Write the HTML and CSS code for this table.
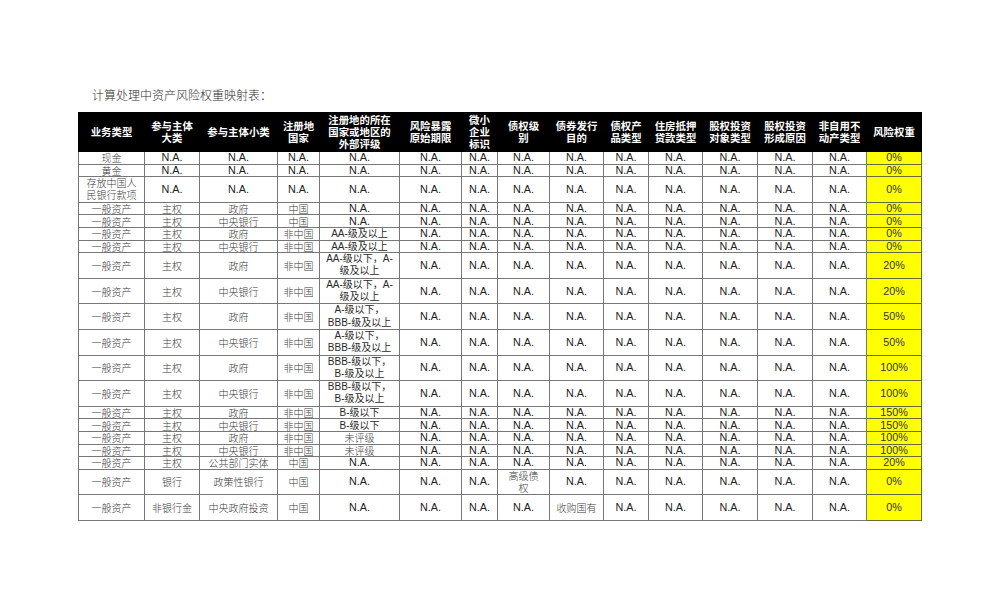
FILE: index.html
```html
<!DOCTYPE html>
<html lang="zh">
<head>
<meta charset="utf-8">
<title>计算处理中资产风险权重映射表</title>
<link rel="stylesheet" href="styles.css">
</head>
<body>
<main class="page">
  <p class="title">计算处理中资产风险权重映射表：</p>
  <table class="risk">
    <colgroup>
      <col class="c66"><col class="c55"><col class="c78"><col class="c42"><col class="c80">
      <col class="c62"><col class="c36"><col class="c52"><col class="c54"><col class="c45">
      <col class="c54"><col class="c55"><col class="c55"><col class="c54"><col class="c55">
    </colgroup>
    <thead>
      <tr class="h">
        <th>业务类型</th>
        <th>参与主体<br>大类</th>
        <th>参与主体小类</th>
        <th>注册地<br>国家</th>
        <th>注册地的所在<br>国家或地区的<br>外部评级</th>
        <th>风险暴露<br>原始期限</th>
        <th>微小<br>企业<br>标识</th>
        <th>债权级<br>别</th>
        <th>债券发行<br>目的</th>
        <th>债权产<br>品类型</th>
        <th>住房抵押<br>贷款类型</th>
        <th>股权投资<br>对象类型</th>
        <th>股权投资<br>形成原因</th>
        <th>非自用不<br>动产类型</th>
        <th>风险权重</th>
      </tr>
    </thead>
    <tbody>
      <tr class="s"><td class="zh">现金</td><td>N.A.</td><td>N.A.</td><td>N.A.</td><td>N.A.</td><td>N.A.</td><td>N.A.</td><td>N.A.</td><td>N.A.</td><td>N.A.</td><td>N.A.</td><td>N.A.</td><td>N.A.</td><td>N.A.</td><td class="w">0%</td></tr>
      <tr class="s"><td class="zh">黄金</td><td>N.A.</td><td>N.A.</td><td>N.A.</td><td>N.A.</td><td>N.A.</td><td>N.A.</td><td>N.A.</td><td>N.A.</td><td>N.A.</td><td>N.A.</td><td>N.A.</td><td>N.A.</td><td>N.A.</td><td class="w">0%</td></tr>
      <tr class="t"><td class="zh two">存放中国人<br>民银行款项</td><td>N.A.</td><td>N.A.</td><td>N.A.</td><td>N.A.</td><td>N.A.</td><td>N.A.</td><td>N.A.</td><td>N.A.</td><td>N.A.</td><td>N.A.</td><td>N.A.</td><td>N.A.</td><td>N.A.</td><td class="w">0%</td></tr>
      <tr class="s"><td class="zh">一般资产</td><td class="zh">主权</td><td class="zh">政府</td><td class="zh">中国</td><td>N.A.</td><td>N.A.</td><td>N.A.</td><td>N.A.</td><td>N.A.</td><td>N.A.</td><td>N.A.</td><td>N.A.</td><td>N.A.</td><td>N.A.</td><td class="w">0%</td></tr>
      <tr class="s"><td class="zh">一般资产</td><td class="zh">主权</td><td class="zh">中央银行</td><td class="zh">中国</td><td>N.A.</td><td>N.A.</td><td>N.A.</td><td>N.A.</td><td>N.A.</td><td>N.A.</td><td>N.A.</td><td>N.A.</td><td>N.A.</td><td>N.A.</td><td class="w">0%</td></tr>
      <tr class="s"><td class="zh">一般资产</td><td class="zh">主权</td><td class="zh">政府</td><td class="zh">非中国</td><td class="mix">AA-级及以上</td><td>N.A.</td><td>N.A.</td><td>N.A.</td><td>N.A.</td><td>N.A.</td><td>N.A.</td><td>N.A.</td><td>N.A.</td><td>N.A.</td><td class="w">0%</td></tr>
      <tr class="s"><td class="zh">一般资产</td><td class="zh">主权</td><td class="zh">中央银行</td><td class="zh">非中国</td><td class="mix">AA-级及以上</td><td>N.A.</td><td>N.A.</td><td>N.A.</td><td>N.A.</td><td>N.A.</td><td>N.A.</td><td>N.A.</td><td>N.A.</td><td>N.A.</td><td class="w">0%</td></tr>
      <tr class="t"><td class="zh">一般资产</td><td class="zh">主权</td><td class="zh">政府</td><td class="zh">非中国</td><td class="mix two">AA-级以下，A-<br>级及以上</td><td>N.A.</td><td>N.A.</td><td>N.A.</td><td>N.A.</td><td>N.A.</td><td>N.A.</td><td>N.A.</td><td>N.A.</td><td>N.A.</td><td class="w">20%</td></tr>
      <tr class="t"><td class="zh">一般资产</td><td class="zh">主权</td><td class="zh">中央银行</td><td class="zh">非中国</td><td class="mix two">AA-级以下，A-<br>级及以上</td><td>N.A.</td><td>N.A.</td><td>N.A.</td><td>N.A.</td><td>N.A.</td><td>N.A.</td><td>N.A.</td><td>N.A.</td><td>N.A.</td><td class="w">20%</td></tr>
      <tr class="t"><td class="zh">一般资产</td><td class="zh">主权</td><td class="zh">政府</td><td class="zh">非中国</td><td class="mix two">A-级以下，<br>BBB-级及以上</td><td>N.A.</td><td>N.A.</td><td>N.A.</td><td>N.A.</td><td>N.A.</td><td>N.A.</td><td>N.A.</td><td>N.A.</td><td>N.A.</td><td class="w">50%</td></tr>
      <tr class="t"><td class="zh">一般资产</td><td class="zh">主权</td><td class="zh">中央银行</td><td class="zh">非中国</td><td class="mix two">A-级以下，<br>BBB-级及以上</td><td>N.A.</td><td>N.A.</td><td>N.A.</td><td>N.A.</td><td>N.A.</td><td>N.A.</td><td>N.A.</td><td>N.A.</td><td>N.A.</td><td class="w">50%</td></tr>
      <tr class="t"><td class="zh">一般资产</td><td class="zh">主权</td><td class="zh">政府</td><td class="zh">非中国</td><td class="mix two">BBB-级以下，<br>B-级及以上</td><td>N.A.</td><td>N.A.</td><td>N.A.</td><td>N.A.</td><td>N.A.</td><td>N.A.</td><td>N.A.</td><td>N.A.</td><td>N.A.</td><td class="w">100%</td></tr>
      <tr class="t"><td class="zh">一般资产</td><td class="zh">主权</td><td class="zh">中央银行</td><td class="zh">非中国</td><td class="mix two">BBB-级以下，<br>B-级及以上</td><td>N.A.</td><td>N.A.</td><td>N.A.</td><td>N.A.</td><td>N.A.</td><td>N.A.</td><td>N.A.</td><td>N.A.</td><td>N.A.</td><td class="w">100%</td></tr>
      <tr class="s"><td class="zh">一般资产</td><td class="zh">主权</td><td class="zh">政府</td><td class="zh">非中国</td><td class="mix">B-级以下</td><td>N.A.</td><td>N.A.</td><td>N.A.</td><td>N.A.</td><td>N.A.</td><td>N.A.</td><td>N.A.</td><td>N.A.</td><td>N.A.</td><td class="w">150%</td></tr>
      <tr class="s"><td class="zh">一般资产</td><td class="zh">主权</td><td class="zh">中央银行</td><td class="zh">非中国</td><td class="mix">B-级以下</td><td>N.A.</td><td>N.A.</td><td>N.A.</td><td>N.A.</td><td>N.A.</td><td>N.A.</td><td>N.A.</td><td>N.A.</td><td>N.A.</td><td class="w">150%</td></tr>
      <tr class="s"><td class="zh">一般资产</td><td class="zh">主权</td><td class="zh">政府</td><td class="zh">非中国</td><td class="zh">未评级</td><td>N.A.</td><td>N.A.</td><td>N.A.</td><td>N.A.</td><td>N.A.</td><td>N.A.</td><td>N.A.</td><td>N.A.</td><td>N.A.</td><td class="w">100%</td></tr>
      <tr class="s"><td class="zh">一般资产</td><td class="zh">主权</td><td class="zh">中央银行</td><td class="zh">非中国</td><td class="zh">未评级</td><td>N.A.</td><td>N.A.</td><td>N.A.</td><td>N.A.</td><td>N.A.</td><td>N.A.</td><td>N.A.</td><td>N.A.</td><td>N.A.</td><td class="w">100%</td></tr>
      <tr class="s"><td class="zh">一般资产</td><td class="zh">主权</td><td class="zh">公共部门实体</td><td class="zh">中国</td><td>N.A.</td><td>N.A.</td><td>N.A.</td><td>N.A.</td><td>N.A.</td><td>N.A.</td><td>N.A.</td><td>N.A.</td><td>N.A.</td><td>N.A.</td><td class="w">20%</td></tr>
      <tr class="t"><td class="zh">一般资产</td><td class="zh">银行</td><td class="zh">政策性银行</td><td class="zh">中国</td><td>N.A.</td><td>N.A.</td><td>N.A.</td><td class="zh two">高级债<br>权</td><td>N.A.</td><td>N.A.</td><td>N.A.</td><td>N.A.</td><td>N.A.</td><td>N.A.</td><td class="w">0%</td></tr>
      <tr class="t"><td class="zh">一般资产</td><td class="zh">非银行金</td><td class="zh">中央政府投资</td><td class="zh">中国</td><td>N.A.</td><td>N.A.</td><td>N.A.</td><td>N.A.</td><td class="zh">收购国有</td><td>N.A.</td><td>N.A.</td><td>N.A.</td><td>N.A.</td><td>N.A.</td><td class="w">0%</td></tr>
    </tbody>
  </table>
</main>
</body>
</html>
```
FILE: styles.css
```css
html, body {
  margin: 0;
  padding: 0;
  background: #ffffff;
}

.page {
  padding: 87px 0 0 78px;
  font-family: "Liberation Sans", "Noto Sans CJK SC", sans-serif;
  color: #222;
}

.title {
  margin: 0 0 7px 14px;
  font-family: "Liberation Serif", "Noto Sans CJK SC", serif;
  font-size: 12px;
  line-height: 18px;
  color: #2e2e2e;
  font-weight: 300;
}

.risk {
  border-collapse: collapse;
  table-layout: fixed;
  width: 843px;
}

.c36 { width: 36px; }
.c42 { width: 42px; }
.c45 { width: 45px; }
.c52 { width: 52px; }
.c54 { width: 54px; }
.c55 { width: 55px; }
.c62 { width: 62px; }
.c66 { width: 66px; }
.c78 { width: 78px; }
.c80 { width: 80px; }

.risk th {
  background: #000;
  color: #fff;
  font-family: "Noto Sans CJK SC", sans-serif;
  font-weight: 700;
  font-size: 10.4px;
  line-height: 12.3px;
  padding: 0;
  border: 1px solid #000;
  text-align: center;
  vertical-align: middle;
}

.risk tr.h { height: 39px; }
.risk tr.s { height: 12.6px; }
.risk tr.t { height: 25.3px; }

.risk td {
  border: 1px solid #777;
  padding: 0;
  text-align: center;
  vertical-align: middle;
  font-size: 10.8px;
  line-height: 11px;
  color: #222;
  white-space: nowrap;
  overflow: hidden;
}

.risk td.zh {
  font-family: "Noto Sans CJK SC", sans-serif;
  font-weight: 300;
  font-size: 10px;
  color: #3a3a3a;
}

.risk td.mix {
  font-size: 10px;
  color: #2a2a2a;
}

.risk td.two {
  line-height: 12.3px;
}

.risk td.w {
  background: #ffff00;
  border-color: #6b6b3a;
  color: #333;
}
```
